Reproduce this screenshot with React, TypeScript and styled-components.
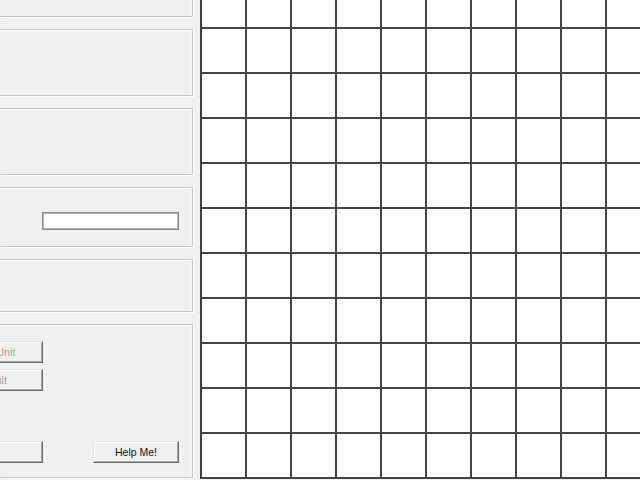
import React from "react";
import styled, { createGlobalStyle } from "styled-components";

const Global = createGlobalStyle`
  html, body { margin: 0; padding: 0; overflow: hidden; background: #f0f0f0; }
  body { font-family: "Liberation Sans", Arial, sans-serif; }
`;

const Window = styled.div`
  display: flex;
  width: 640px;
  height: 480px;
  overflow: hidden;
  background: #f0f0f0;
`;

const SidePanel = styled.div`
  flex: 0 0 200px;
  display: flex;
  flex-direction: column;
  gap: 12px;
  padding-right: 7px;
  margin-top: -20px;
  box-sizing: border-box;
  overflow: hidden;
`;

const GroupBox = styled.div<{ $h: number }>`
  position: relative;
  height: ${(p) => p.$h}px;
  flex: 0 0 auto;
  box-sizing: border-box;
  border: 1px solid #c6c6c6;
  border-left: none;
  box-shadow: 1px 1px 0 #ffffff, inset 0 1px 0 #ffffff, inset -1px 0 0 #f7f7f7;
  display: flex;
  flex-direction: column;
`;

const GroupLabel = styled.span`
  margin-top: 16px;
  margin-left: -40px;
  font-size: 10px;
  color: #9a9a9a;
  white-space: nowrap;
`;

const FieldRow = styled.div`
  display: flex;
  justify-content: flex-end;
  padding: 24px 13px 0 0;
`;

const TextBox = styled.div`
  width: 137px;
  height: 18px;
  box-sizing: border-box;
  background: #ffffff;
  border: 1px solid #8a8a8a;
  box-shadow: inset 0 0 0 1px #b4b4b4;
`;

const ButtonArea = styled.div`
  display: flex;
  flex-direction: column;
  padding-top: 16px;
  height: 100%;
  box-sizing: border-box;
`;

const ButtonRow = styled.div<{ $top: number }>`
  display: flex;
  align-items: center;
  justify-content: space-between;
  margin-top: ${(p) => p.$top}px;
  padding-right: 13px;
`;

const Button = styled.div<{ $w: number; $shift?: number; $padRight?: number; $disabled?: boolean }>`
  width: ${(p) => p.$w}px;
  margin-left: ${(p) => p.$shift ?? 0}px;
  padding-right: ${(p) => p.$padRight ?? 0}px;
  height: 22px;
  box-sizing: border-box;
  display: flex;
  align-items: center;
  justify-content: center;
  font-size: 10.5px;
  color: ${(p) => (p.$disabled ? "#a3a3a3" : "#111111")};
  background: #f0f0f0;
  border-top: 1px solid #e6e6e6;
  border-left: 1px solid #e6e6e6;
  border-right: 1px solid #6a6a6a;
  border-bottom: 1px solid #6a6a6a;
  box-shadow: inset -1px -1px 0 #a8a8a8, inset 1px 1px 0 #ffffff;
  white-space: nowrap;
`;

const Board = styled.div`
  flex: 0 0 auto;
  display: grid;
  grid-template-columns: repeat(10, 45px);
  grid-auto-rows: 45px;
  margin-top: -16px;
  background: #ffffff;
  border-left: 2px solid #404040;
  align-self: flex-start;
`;

const Cell = styled.div`
  box-sizing: border-box;
  border-right: 2px solid #454545;
  border-bottom: 2px solid #454545;
  background: #ffffff;
`;

export default function App() {
  const cells = Array.from({ length: 110 }, (_, i) => i);
  return (
    <>
      <Global />
      <Window>
        <SidePanel>
          <GroupBox $h={37} />
          <GroupBox $h={67} />
          <GroupBox $h={67}>
            <GroupLabel>Speed: c</GroupLabel>
          </GroupBox>
          <GroupBox $h={60}>
            <FieldRow>
              <TextBox />
            </FieldRow>
          </GroupBox>
          <GroupBox $h={53} />
          <GroupBox $h={154}>
            <ButtonArea>
              <ButtonRow $top={0}>
                <Button $w={96} $shift={-53} $disabled>
                  Add Unit
                </Button>
              </ButtonRow>
              <ButtonRow $top={6}>
                <Button $w={96} $shift={-53} $padRight={12} $disabled>
                  Kill Unit
                </Button>
              </ButtonRow>
              <ButtonRow $top={50}>
                <Button $w={140} $shift={-97}>
                  Reset
                </Button>
                <Button $w={86}>Help Me!</Button>
              </ButtonRow>
            </ButtonArea>
          </GroupBox>
        </SidePanel>
        <Board>
          {cells.map((i) => (
            <Cell key={i} />
          ))}
        </Board>
      </Window>
    </>
  );
}
